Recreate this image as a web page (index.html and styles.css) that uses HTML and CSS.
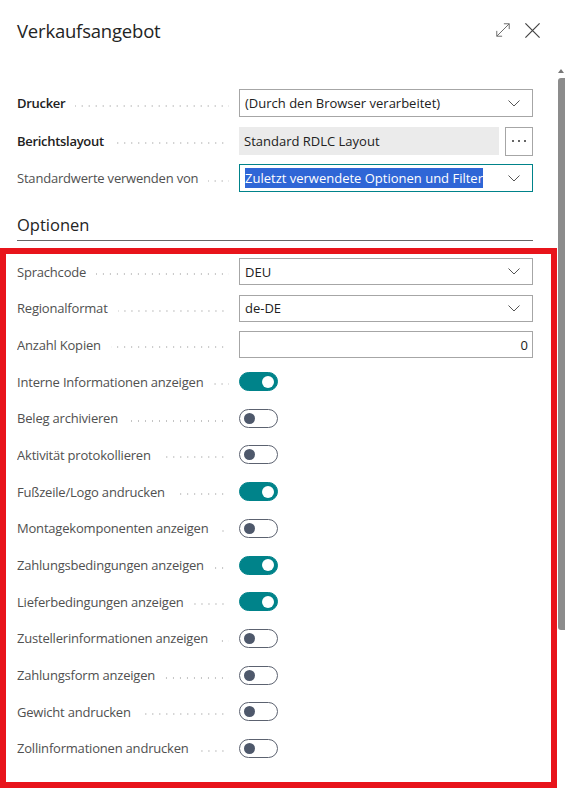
FILE: index.html
```html
<!DOCTYPE html>
<html lang="de">
<head>
<meta charset="utf-8">
<title>Verkaufsangebot</title>
<link rel="stylesheet" href="styles.css">
</head>
<body>
<div class="window">
  <div class="dialog">
    <header class="head">
      <h1 class="title">Verkaufsangebot</h1>
      <div class="actions">
        <svg class="ico-expand" width="18" height="18" viewBox="0 0 18 18" fill="none" stroke="#6b6b6b" stroke-width="1.1">
          <path d="M2 16 L16 2"/>
          <path d="M10 2 H16 V8"/>
          <path d="M2 10 V16 H8"/>
        </svg>
        <svg class="ico-close" width="18" height="18" viewBox="0 0 18 18" fill="none" stroke="#444" stroke-width="1.3">
          <path d="M1.5 1.5 L16.5 16.5 M16.5 1.5 L1.5 16.5"/>
        </svg>
      </div>
    </header>

    <div class="form">
      <div class="row">
        <div class="label bold"><span>Drucker</span></div>
        <div class="select"><span class="val">(Durch den Browser verarbeitet)</span><svg class="chev" width="12" height="7" viewBox="0 0 12 7"><path d="M0.5 0.5 L6 6 L11.5 0.5" fill="none" stroke="#555" stroke-width="1"/></svg></div>
      </div>
      <div class="row">
        <div class="label bold"><span>Berichtslayout</span></div>
        <div class="lookup">
          <div class="readonly">Standard RDLC Layout</div>
          <div class="more"><i></i><i></i><i></i></div>
        </div>
      </div>
      <div class="row">
        <div class="label"><span>Standardwerte verwenden von</span></div>
        <div class="select focus"><span class="val"><span class="sel">Zuletzt verwendete Optionen und Filter</span></span><svg class="chev" width="12" height="7" viewBox="0 0 12 7"><path d="M0.5 0.5 L6 6 L11.5 0.5" fill="none" stroke="#555" stroke-width="1"/></svg></div>
      </div>
    </div>

    <h2 class="section">Optionen</h2>

    <div class="options">
      <div class="row">
        <div class="label"><span>Sprachcode</span></div>
        <div class="select"><span class="val">DEU</span><svg class="chev" width="12" height="7" viewBox="0 0 12 7"><path d="M0.5 0.5 L6 6 L11.5 0.5" fill="none" stroke="#555" stroke-width="1"/></svg></div>
      </div>
      <div class="row">
        <div class="label"><span>Regionalformat</span></div>
        <div class="select"><span class="val">de-DE</span><svg class="chev" width="12" height="7" viewBox="0 0 12 7"><path d="M0.5 0.5 L6 6 L11.5 0.5" fill="none" stroke="#555" stroke-width="1"/></svg></div>
      </div>
      <div class="row">
        <div class="label"><span>Anzahl Kopien</span></div>
        <div class="input num">0</div>
      </div>
      <div class="row">
        <div class="label"><span>Interne Informationen anzeigen</span></div>
        <div><span class="toggle on"></span></div>
      </div>
      <div class="row">
        <div class="label"><span>Beleg archivieren</span></div>
        <div><span class="toggle"></span></div>
      </div>
      <div class="row">
        <div class="label"><span>Aktivität protokollieren</span></div>
        <div><span class="toggle"></span></div>
      </div>
      <div class="row">
        <div class="label"><span>Fußzeile/Logo andrucken</span></div>
        <div><span class="toggle on"></span></div>
      </div>
      <div class="row">
        <div class="label"><span>Montagekomponenten anzeigen</span></div>
        <div><span class="toggle"></span></div>
      </div>
      <div class="row">
        <div class="label"><span>Zahlungsbedingungen anzeigen</span></div>
        <div><span class="toggle on"></span></div>
      </div>
      <div class="row">
        <div class="label"><span>Lieferbedingungen anzeigen</span></div>
        <div><span class="toggle on"></span></div>
      </div>
      <div class="row">
        <div class="label"><span>Zustellerinformationen anzeigen</span></div>
        <div><span class="toggle"></span></div>
      </div>
      <div class="row">
        <div class="label"><span>Zahlungsform anzeigen</span></div>
        <div><span class="toggle"></span></div>
      </div>
      <div class="row">
        <div class="label"><span>Gewicht andrucken</span></div>
        <div><span class="toggle"></span></div>
      </div>
      <div class="row">
        <div class="label"><span>Zollinformationen andrucken</span></div>
        <div><span class="toggle"></span></div>
      </div>
    </div>
  </div>
  <div class="scrollbar">
    <div class="arrow"></div>
    <div class="thumb"></div>
  </div>
</div>
</body>
</html>
```

FILE: styles.css
```css
* { box-sizing: border-box; }
html, body { margin: 0; padding: 0; background: #fff; }
body {
  font-family: "Open Sans", "Noto Sans", sans-serif;
  color: #212121;
  width: 565px;
  height: 794px;
  overflow: hidden;
}
.window {
  display: flex;
  width: 565px;
  height: 794px;
}
.dialog {
  width: 558px;
  padding: 0 25px 0 17px;
}
.head {
  height: 60px;
  display: flex;
  align-items: center;
  justify-content: space-between;
}
.title {
  margin: 0;
  font-size: 18.5px;
  font-weight: 500;
  color: #242424;
  letter-spacing: -0.2px;
}
.actions {
  display: flex;
  align-items: center;
  gap: 13px;
  margin-right: -8px;
}
.ico-expand { width: 16px; height: 16px; }
.ico-close { width: 17px; height: 17px; }

.form {
  padding-top: 29px;
  display: flex;
  flex-direction: column;
  gap: 9.5px;
}
.form .row { height: 28px; }
.row {
  display: grid;
  grid-template-columns: 212px 294px;
  column-gap: 10px;
  align-items: center;
}
.label {
  display: flex;
  align-items: center;
  font-size: 13px;
  letter-spacing: -0.2px;
  color: #505050;
  white-space: nowrap;
  overflow: hidden;
}
.label.bold { font-weight: 600; color: #212121; letter-spacing: -0.3px; }
.label::after {
  content: "";
  flex: 1;
  height: 2px;
  margin: 5px 0 0 10px;
  background-image: radial-gradient(circle, #c4c4c4 0.8px, transparent 1px);
  background-size: 7px 2px;
  background-position: right 3px top 0;
}
.select, .input {
  height: 28px;
  border: 1px solid #a6a6a6;
  display: flex;
  align-items: center;
  justify-content: space-between;
  padding: 0 12px 0 5px;
  font-size: 13px;
  color: #212121;
  background: #fff;
}
.select.focus { border-color: #00838a; }
.sel {
  background: #2f66d6;
  color: #fff;
  padding: 1px 0;
}
.chev { flex: none; }
.input.num { justify-content: flex-end; padding-right: 4px; }
.lookup {
  display: flex;
  gap: 6px;
  height: 28px;
}
.readonly {
  flex: 1;
  background: #ebebeb;
  display: flex;
  align-items: center;
  padding-left: 5px;
  font-size: 13px;
  color: #212121;
}
.more {
  width: 28px;
  height: 29px;
  border: 1px solid #a6a6a6;
  display: flex;
  align-items: center;
  justify-content: center;
  gap: 4px;
}
.more i {
  display: block;
  width: 2px;
  height: 2px;
  border-radius: 50%;
  background: #333;
}

.section {
  margin: 22px 0 0;
  font-size: 16.5px;
  font-weight: 500;
  line-height: 22px;
  padding-bottom: 4px;
  border-bottom: 1px solid #666;
  color: #242424;
}

.options {
  margin: 7px -24px 0 -17px;
  border: 6px solid #e8141b;
  padding: 4px 18px 20px 11px;
  display: flex;
  flex-direction: column;
  gap: 9.7px;
}
.options .row { height: 27px; }
.options .select, .options .input { height: 27px; }

.toggle {
  display: block;
  position: relative;
  width: 39px;
  height: 19px;
  border-radius: 10px;
  border: 1px solid #5c6270;
  background: #fff;
}
.toggle::after {
  content: "";
  position: absolute;
  top: 3px;
  left: 4px;
  width: 11px;
  height: 11px;
  border-radius: 50%;
  background: #4e586b;
}
.toggle.on {
  background: #00838a;
  border-color: #00838a;
}
.toggle.on::after {
  left: auto;
  right: 3px;
  top: 2.5px;
  width: 12px;
  height: 12px;
  background: #fff;
}

.scrollbar {
  width: 7px;
  display: flex;
  flex-direction: column;
  align-items: flex-end;
  padding-top: 69px;
}
.arrow {
  width: 0;
  height: 0;
  border-left: 3px solid transparent;
  border-right: 3px solid transparent;
  border-bottom: 4px solid #777;
  margin-right: 1px;
}
.thumb {
  margin-top: 5px;
  width: 7px;
  height: 552px;
  background: #8c8c8c;
  border-radius: 3px 0 0 3px;
}
```
